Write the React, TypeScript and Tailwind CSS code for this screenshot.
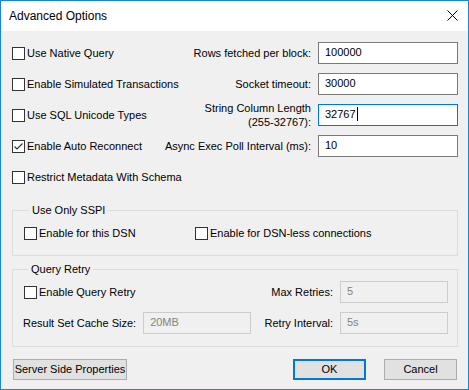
import * as React from "react";

const font = { fontFamily: '"Liberation Sans", Arial, sans-serif' };

function Check({ checked = false }: { checked?: boolean }) {
  return (
    <span className="flex h-[13px] w-[13px] shrink-0 items-center justify-center border border-[#333333] bg-white">
      {checked && (
        <svg width="11" height="11" viewBox="0 0 11 11">
          <path d="M1.5 5.5 L4 8 L9.5 2.5" fill="none" stroke="#333333" strokeWidth="1.2" />
        </svg>
      )}
    </span>
  );
}

function CheckRow({ label, checked }: { label: string; checked?: boolean }) {
  return (
    <label className="flex items-center gap-[2px] whitespace-nowrap text-black">
      <Check checked={checked} />
      <span className="leading-[15px]">{label}</span>
    </label>
  );
}

function Field({
  value,
  width,
  focused,
  disabled,
}: {
  value: string;
  width: string;
  focused?: boolean;
  disabled?: boolean;
}) {
  return (
    <div
      className={[
        "flex h-[22px] shrink-0 items-center pb-[2px] pl-[6px] border",
        width,
        disabled
          ? "border-[#cccccc] bg-[#f0f0f0] text-[#838383]"
          : focused
            ? "border-[#0078d7] bg-white text-black"
            : "border-[#7a7a7a] bg-white text-black",
      ].join(" ")}
    >
      <span>{value}</span>
      {focused && <span className="ml-[1px] h-[14px] w-[1px] bg-black" />}
    </div>
  );
}

function LabeledField({
  label,
  value,
  focused,
}: {
  label: React.ReactNode;
  value: string;
  focused?: boolean;
}) {
  return (
    <div className="flex items-center gap-[7px]">
      <span className="whitespace-nowrap text-right leading-[14px]">{label}</span>
      <Field value={value} width="w-[140px]" focused={focused} />
    </div>
  );
}

function Btn({ children, primary, width }: { children: React.ReactNode; primary?: boolean; width: string }) {
  return (
    <button
      className={[
        "flex h-[21px] items-center justify-center whitespace-nowrap bg-[#e1e1e1] text-black",
        width,
        primary ? "border-2 border-[#0078d7]" : "border border-[#adadad]",
      ].join(" ")}
    >
      {children}
    </button>
  );
}

export default function App() {
  return (
    <div
      className="flex h-[390px] w-[469px] flex-col border border-[#1883d7] bg-[#f0f0f0] text-[11px] text-black"
      style={font}
    >
      {/* title bar */}
      <div className="flex h-[30px] shrink-0 items-center justify-between bg-white pl-[8px] pr-[10px]">
        <span className="text-[12px]">Advanced Options</span>
        <svg width="11" height="11" viewBox="0 0 11 11" className="mb-[2px]">
          <path d="M0.5 0.5 L10.5 10.5 M10.5 0.5 L0.5 10.5" stroke="#000" strokeWidth="1" />
        </svg>
      </div>

      <div className="flex flex-col pl-[11px] pr-[10px] pt-[11px]">
        {/* top options */}
        <div className="flex flex-col gap-[9px]">
          <div className="flex h-[22px] items-center justify-between">
            <CheckRow label="Use Native Query" />
            <LabeledField label="Rows fetched per block:" value="100000" />
          </div>
          <div className="flex h-[22px] items-center justify-between">
            <CheckRow label="Enable Simulated Transactions" />
            <LabeledField label="Socket timeout:" value="30000" />
          </div>
          <div className="flex h-[22px] items-center justify-between">
            <CheckRow label="Use SQL Unicode Types" />
            <LabeledField
              label={
                <>
                  String Column Length
                  <br />
                  (255-32767):
                </>
              }
              value="32767"
              focused
            />
          </div>
          <div className="flex h-[22px] items-center justify-between">
            <CheckRow label="Enable Auto Reconnect" checked />
            <LabeledField label="Async Exec Poll Interval (ms):" value="10" />
          </div>
          <div className="flex h-[22px] items-center">
            <CheckRow label="Restrict Metadata With Schema" />
          </div>
        </div>

        {/* SSPI group */}
        <fieldset className="mt-[15px] border border-[#dcdcdc] px-[11px] pb-[14px] pt-[9px]">
          <legend className="ml-[5px] px-[3px] leading-[14px]">Use Only SSPI</legend>
          <div className="flex items-center">
            <div className="w-[171px]">
              <CheckRow label="Enable for this DSN" />
            </div>
            <CheckRow label="Enable for DSN-less connections" />
          </div>
        </fieldset>

        {/* Query retry group */}
        <fieldset className="mt-[6px] border border-[#dcdcdc] pb-[12px] pl-[10px] pr-[9px] pt-[5px]">
          <legend className="ml-[5px] px-[3px] leading-[14px]">Query Retry</legend>
          <div className="flex flex-col gap-[9px]">
            <div className="flex h-[22px] items-center justify-between">
              <div className="pl-[1px]">
                <CheckRow label="Enable Query Retry" />
              </div>
              <div className="flex items-center gap-[7px] whitespace-nowrap">
                <span>Max Retries:</span>
                <Field value="5" width="w-[108px]" disabled />
              </div>
            </div>
            <div className="flex h-[22px] items-center justify-between">
              <div className="flex items-center gap-[7px] whitespace-nowrap">
                <span>Result Set Cache Size:</span>
                <Field value="20MB" width="w-[108px]" disabled />
              </div>
              <div className="flex items-center gap-[7px] whitespace-nowrap">
                <span>Retry Interval:</span>
                <Field value="5s" width="w-[108px]" disabled />
              </div>
            </div>
          </div>
        </fieldset>

        {/* buttons */}
        <div className="mt-[12px] flex items-center pl-[1px] pr-[1px]">
          <Btn width="w-[114px]">Server Side Properties</Btn>
          <div className="ml-auto flex gap-[18px]">
            <Btn width="w-[73px]" primary>
              OK
            </Btn>
            <Btn width="w-[73px]">Cancel</Btn>
          </div>
        </div>
      </div>
    </div>
  );
}
